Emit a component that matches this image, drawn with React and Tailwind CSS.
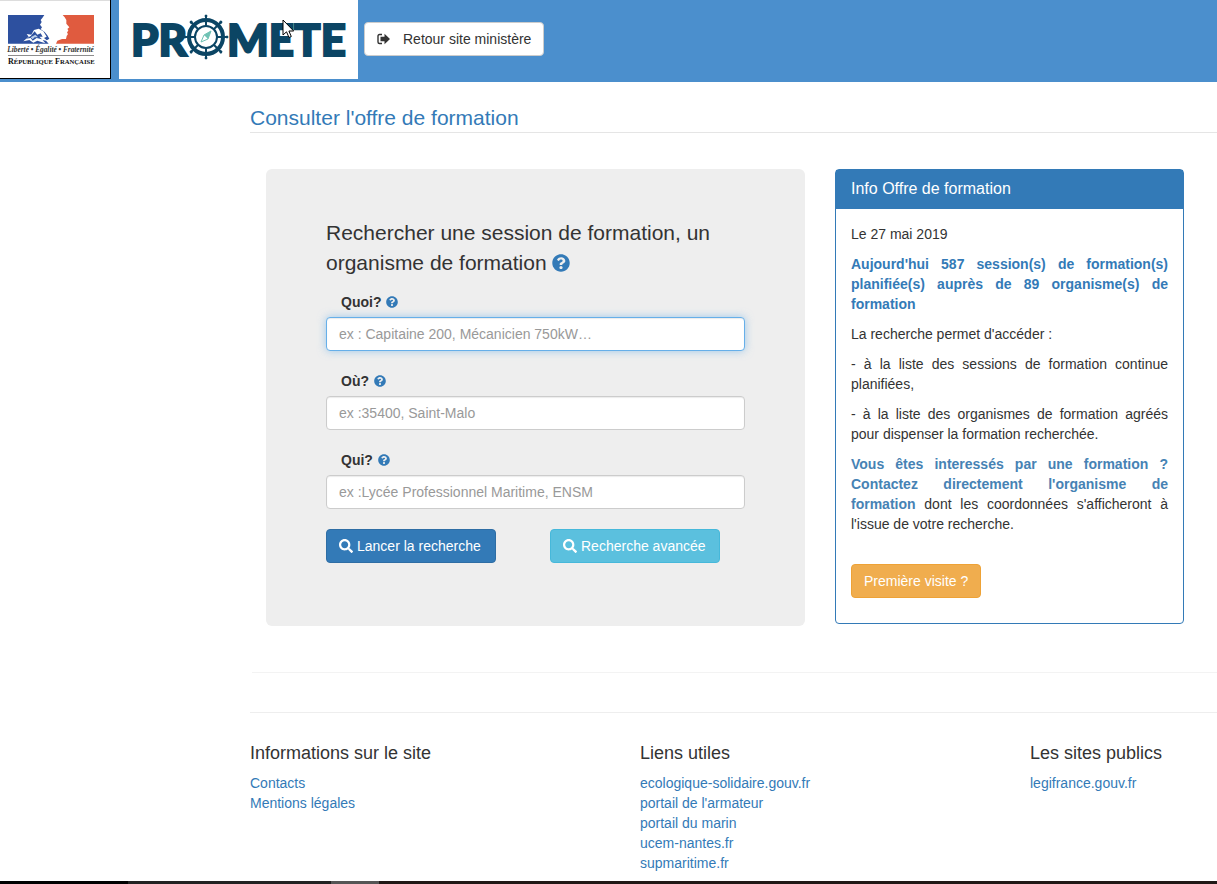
import { FaQuestionCircle, FaSearch } from 'react-icons/fa';

const searchFields = [
  { id: 'quoi', label: 'Quoi?', placeholder: 'ex : Capitaine 200, Mécanicien 750kW…', active: true },
  { id: 'ou', label: 'Où?', placeholder: 'ex :35400, Saint-Malo' },
  { id: 'qui', label: 'Qui?', placeholder: 'ex :Lycée Professionnel Maritime, ENSM' }
];

const footerColumns = [
  { title: 'Informations sur le site', links: ['Contacts', 'Mentions légales'] },
  {
    title: 'Liens utiles',
    links: [
      'ecologique-solidaire.gouv.fr',
      'portail de l\'armateur',
      'portail du marin',
      'ucem-nantes.fr',
      'supmaritime.fr'
    ]
  },
  { title: 'Les sites publics', links: ['legifrance.gouv.fr'] }
];

const spokes = [0, 45, 90, 135, 180, 225, 270, 315];

function RepubliqueLogo() {
  return (
    <svg width="111" height="79" viewBox="0 0 333 237" role="img" aria-label="République Française">
      <rect width="333" height="237" fill="#000" />
      <rect width="330" height="234" fill="#fff" />
      <rect width="330" height="3" fill="#ddd" />
      <path d="M24 45H133L127 54L122 60L125 66L120 74L126 82L122 88L134 96L142 106L148 116L138 122L146 131H24Z" fill="#2d509f" />
      <path d="M70 124L86 110L80 102L94 104L102 90L116 86L130 94L140 110L132 114L144 124L128 120L136 130L112 122L100 128L88 120Z" fill="#fff" />
      <path d="M78 116L92 108L104 94L112 104L122 100L128 110L118 110L126 118L110 114L98 122L92 114Z" fill="#2d509f" />
      <path d="M92 112L106 104L114 112L104 112L98 118Z" fill="#b9cde8" />
      <path d="M188 45H282V131H168L172 122L186 117H198L200 108L204 102L201 98L205 91L202 87L208 82L199 71L199 60L194 52Z" fill="#e05b3f" />
      <text x="22" y="156" fontFamily="Liberation Serif, serif" fontSize="22" fontWeight="700" fontStyle="italic" fill="#333">
        Liberté • Égalité • Fraternité
      </text>
      <rect x="24" y="165" width="258" height="2" fill="#555" />
      <text x="24" y="192" fontFamily="Liberation Serif, serif" fontSize="24" fontWeight="700" fill="#111">
        R<tspan fontSize="20">ÉPUBLIQUE</tspan> F<tspan fontSize="20">RANÇAISE</tspan>
      </text>
    </svg>
  );
}

function PrometeLogo() {
  return (
    <svg width="239" height="79" viewBox="0 0 239 79" role="img" aria-label="Promete">
      <rect width="239" height="79" fill="#fff" />
      <g fill="#0b4564" stroke="#0b4564" strokeWidth="2" fontFamily="Lato, sans-serif" fontSize="44" fontWeight="900">
        <text x="12" y="56">PR</text>
        <text x="108" y="56">METE</text>
      </g>
      <g transform="translate(87 37)" stroke="#0b4564" fill="none">
        <circle r="19" fill="#fff" stroke="none" />
        <circle r="17" strokeWidth="4" />
        <circle r="11" strokeWidth="2" />
        {spokes.map((angle) => (
          <g key={angle} transform={`rotate(${angle})`}>
            <path d="M0 -11V-22" strokeWidth="2" />
            <circle cy="-21" r="1" fill="#0b4564" />
          </g>
        ))}
      </g>
      <path d="M92 31L89 39L82 42L85 35Z" fill="#fff" stroke="#6fc2b4" />
      <path d="M92 31L89 39L85 35Z" fill="#6fc2b4" />
    </svg>
  );
}

function LogOutIcon() {
  return (
    <svg width="14" height="12" viewBox="0 0 14 12" aria-hidden="true">
      <path d="M5 1.5H2.5Q1 1.5 1 3V9Q1 10.5 2.5 10.5H5" fill="none" stroke="currentColor" strokeWidth="1.4" />
      <path d="M3.5 3.8H7.5V0.8L13 6L7.5 11.2V8.2H3.5Z" fill="currentColor" />
    </svg>
  );
}

function Header() {
  return (
    <header className="relative flex h-[82px] items-start bg-[#4b8fcd]">
      <a href="#republique" className="mr-2">
        <RepubliqueLogo />
      </a>
      <a href="#accueil" className="mr-1.5">
        <PrometeLogo />
      </a>
      <button type="button" className="mt-[22px] flex h-[34px] items-center gap-3 rounded border border-[#ccc] bg-white px-3">
        <LogOutIcon />
        Retour site ministère
      </button>
      <svg className="absolute top-[19px] left-[282px]" width="13" height="20" viewBox="0 0 13 20" aria-hidden="true">
        <path d="M1 1V16L4.5 12.8L7 18.5L9.3 17.5L6.9 12H11.7Z" fill="#fff" stroke="#000" />
      </svg>
    </header>
  );
}

function SearchPanel() {
  return (
    <form className="rounded-md bg-[#eee] px-[60px] pt-[49px] pb-[63px]">
      <h2 className="mb-3.5 text-[21px] leading-[30px]">
        Rechercher une session de formation, un organisme de formation{' '}
        <FaQuestionCircle className="inline size-[18px] align-[-2px] text-[#337ab7]" aria-hidden="true" />
      </h2>
      <div className="mb-5 flex flex-col gap-5">
        {searchFields.map((field) => (
          <div key={field.id}>
            <label htmlFor={field.id} className="mb-[5px] flex items-center gap-[5px] px-[15px] font-bold">
              {field.label}
              <FaQuestionCircle className="size-3 text-[#337ab7]" aria-hidden="true" />
            </label>
            <input
              id={field.id}
              type="text"
              placeholder={field.placeholder}
              className={`block h-[34px] w-full rounded border bg-white px-3 placeholder:text-[#999] ${
                field.active
                  ? 'border-[#66afe9] shadow-[inset_0_1px_1px_rgba(0,0,0,0.08),0_0_8px_rgba(102,175,233,0.6)]'
                  : 'border-[#ccc] shadow-[inset_0_1px_1px_rgba(0,0,0,0.08)]'
              }`}
            />
          </div>
        ))}
      </div>
      <div className="flex gap-[54px]">
        <button type="submit" className="flex h-[34px] w-[170px] items-center gap-1 rounded border border-[#2e6da4] bg-[#337ab7] px-3 whitespace-nowrap text-white">
          <FaSearch className="size-3.5" aria-hidden="true" />
          Lancer la recherche
        </button>
        <button type="button" className="flex h-[34px] w-[170px] items-center gap-1 rounded border border-[#46b8da] bg-[#5bc0de] px-3 whitespace-nowrap text-white">
          <FaSearch className="size-3.5" aria-hidden="true" />
          Recherche avancée
        </button>
      </div>
    </form>
  );
}

function InfoPanel() {
  return (
    <aside className="self-start rounded border border-[#337ab7] bg-white">
      <h2 className="bg-[#337ab7] px-[15px] pt-[7px] pb-2 text-base leading-6 text-white">Info Offre de formation</h2>
      <div className="space-y-2.5 px-[15px] pt-[15px] pb-[25px] text-justify">
        <p>Le 27 mai 2019</p>
        <p className="font-bold text-[#337ab7]">
          Aujourd&apos;hui 587 session(s) de formation(s) planifiée(s) auprès de 89 organisme(s) de formation
        </p>
        <p>La recherche permet d&apos;accéder :</p>
        <p>- à la liste des sessions de formation continue planifiées,</p>
        <p>- à la liste des organismes de formation agréés pour dispenser la formation recherchée.</p>
        <p>
          <strong className="text-[#4682b4]">
            Vous êtes interessés par une formation ? Contactez directement l&apos;organisme de formation
          </strong>{' '}
          dont les coordonnées s&apos;afficheront à l&apos;issue de votre recherche.
        </p>
        <button type="button" className="mt-5 h-[34px] rounded border border-[#eea236] bg-[#f0ad4e] px-3 text-white">
          Première visite ?
        </button>
      </div>
    </aside>
  );
}

function Footer() {
  return (
    <footer className="mt-[39px] grid grid-cols-[390fr_390fr_187fr] border-t border-[#eee] pt-[30px] pb-2">
      {footerColumns.map((column) => (
        <section key={column.title}>
          <h3 className="mb-2.5 text-lg leading-5 whitespace-nowrap">{column.title}</h3>
          <ul>
            {column.links.map((link) => (
              <li key={link}>
                <a href="#lien" className="text-[#337ab7]">{link}</a>
              </li>
            ))}
          </ul>
        </section>
      ))}
    </footer>
  );
}

export default function App() {
  return (
    <div className="bg-white font-['Liberation_Sans',Arial,sans-serif] text-sm leading-5 text-[#333]">
      <Header />
      <div className="pl-[250px]">
        <main>
          <h1 className="border-b border-[#e5e5e5] pt-[21px] text-[21px] leading-[29px] text-[#337ab7]">
            Consulter l&apos;offre de formation
          </h1>
          <div className="grid grid-cols-[539fr_349fr] gap-[30px] pt-9 pr-[33px] pb-[46px] pl-4">
            <SearchPanel />
            <InfoPanel />
          </div>
          <hr className="ml-0.5 border-[#f3f3f3]" />
        </main>
        <Footer />
      </div>
      <div className="flex h-[3px] bg-[#201816]">
        <div className="w-32 bg-black" />
        <div className="w-[203px] bg-[#222]" />
        <div className="w-12 bg-[#555]" />
      </div>
    </div>
  );
}
